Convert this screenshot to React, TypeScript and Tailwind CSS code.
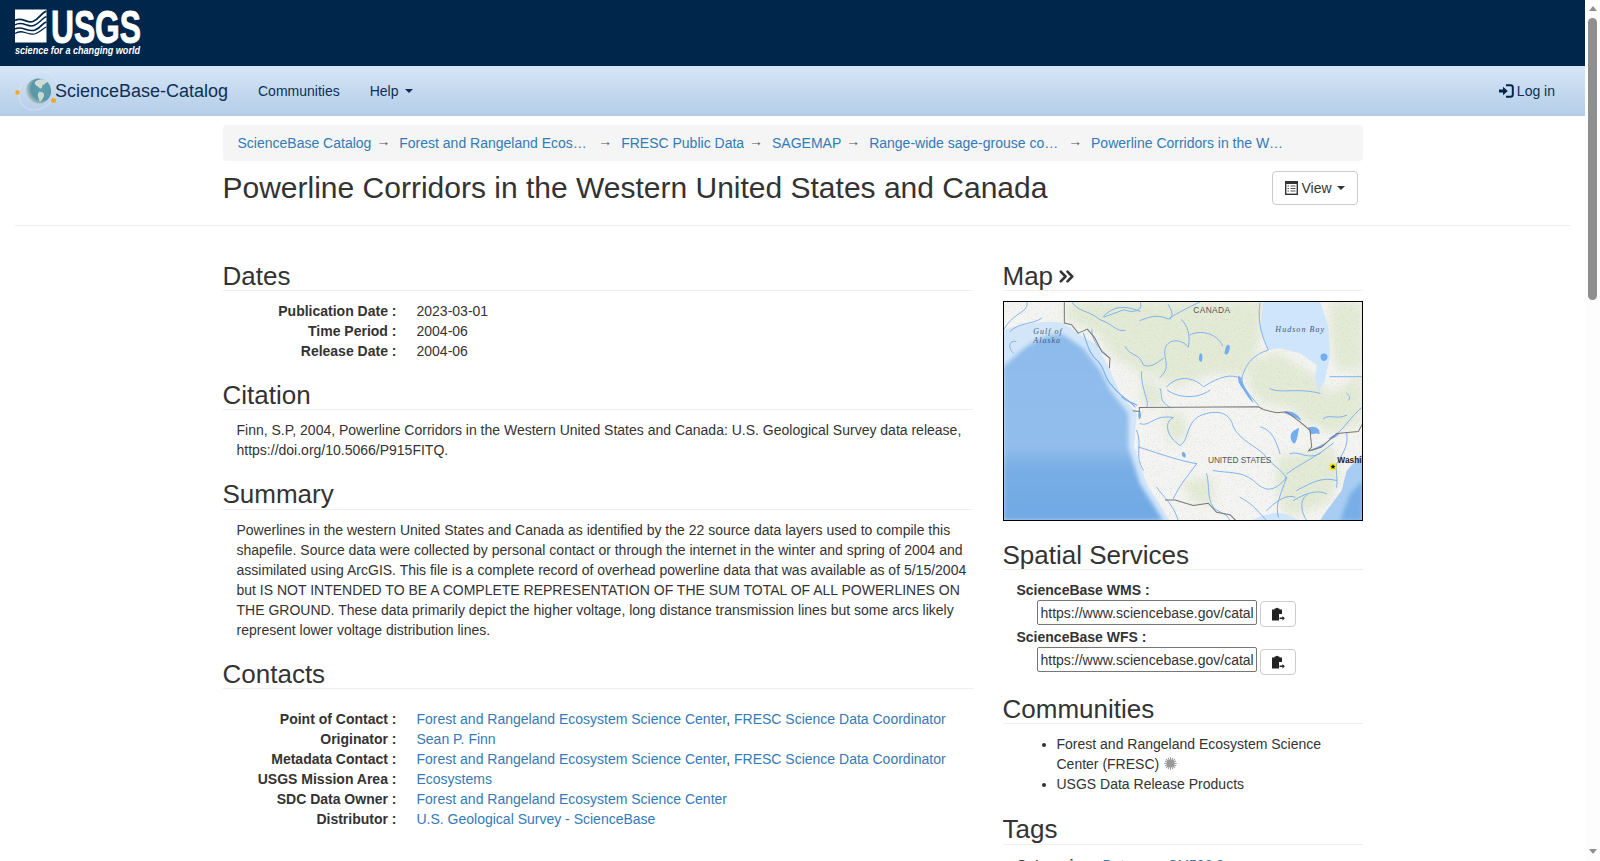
import React from 'react';
import { ChevronsRight } from 'lucide-react';

const UsgsLogo = () => (
  <svg width="150" height="66" viewBox="0 0 150 66" className="block">
    <rect x="15" y="9.5" width="31.5" height="33" fill="#fff" />
    <g fill="none" stroke="#00264c">
      <path d="M15 20.5C22 16 27 24 33 21.5S41 13 46.5 11" strokeWidth="1.8" />
      <path d="M15 25C22 20 28 28 34 25.5S42 18 46.5 16.5" strokeWidth="1.5" />
      <path d="M15 29C22 25 28 33 35 30S42 23 46.5 22" strokeWidth="1.6" />
      <path d="M15 33.5C23 28 29 37 36 33.5S43 28 46.5 27" strokeWidth="1.2" />
    </g>
    <text x="51" y="42.5" fontSize="46" fontWeight="700" fill="#fff" stroke="#fff" strokeWidth="1" textLength="90" lengthAdjust="spacingAndGlyphs" fontFamily="Liberation Sans">USGS</text>
    <text x="15" y="54" fontSize="10.5" fontWeight="700" fontStyle="italic" fill="#fff" textLength="125" lengthAdjust="spacingAndGlyphs" fontFamily="Liberation Sans">science for a changing world</text>
  </svg>
);

const GlobeLogo = () => (
  <svg width="42" height="50" viewBox="13 66 42 50" className="block shrink-0 overflow-visible">
    <defs>
      <radialGradient id="globe" cx="0.64" cy="0.42" r="0.72">
        <stop offset="0" stopColor="#5d9fb0" />
        <stop offset="0.6" stopColor="#5a97a6" />
        <stop offset="0.82" stopColor="#a7bcc0" />
        <stop offset="1" stopColor="#e8e8e6" />
      </radialGradient>
    </defs>
    <ellipse cx="38" cy="91" rx="21" ry="17" fill="none" stroke="#dbe8f4" strokeWidth="0.7" transform="rotate(-45 38 91)" />
    <circle cx="38.5" cy="91" r="12.6" fill="url(#globe)" />
    <path d="M36 81c3-2 7-2.500 10-1 2 1.500 1 3-1 3.500-1 1.500-3 1.500-3 3.500 0 1.500-2 2-3 .5-1.500-1.500-3-1.500-4-3.500-.5-1.500 0-2.500 1-3z" fill="#cfdcd6" />
    <path d="M39 92c2-.5 4 .5 5 2 .5 2-.5 3.500-1.500 5-1 1.500-2 3-3 2.500-.5-2-1-3.500-1.500-5-.5-1.500 0-3.500 1-4.500z" fill="#c9d9d2" />
    <circle cx="17.500" cy="92.500" r="2.200" fill="#f5a623" />
    <circle cx="53.500" cy="100.500" r="2.500" fill="#f5a623" />
  </svg>
);

const LogInIcon = () => (
  <svg width="15" height="14" viewBox="0 0 15 14" className="shrink-0">
    <path d="M0 5.500h4V2.800L8.800 7 4 11.200V8.500H0z" fill="#00264c" />
    <path d="M7 1.200h4.500a2.300 2.300 0 0 1 2.300 2.300v7a2.300 2.300 0 0 1-2.300 2.300H7" fill="none" stroke="#00264c" strokeWidth="2" />
  </svg>
);

const ListIcon = () => (
  <svg width="13" height="14" viewBox="0 0 13 14" className="shrink-0">
    <rect x="0.700" y="0.700" width="11.600" height="12.600" fill="#fff" stroke="#333" strokeWidth="1.400" />
    <path d="M1 1h11v2H1z" fill="#333" />
    <path d="M2.500 5h1.500M2.500 7.500h1.500M2.500 10h1.500M5.500 5h5M5.500 7.500h5M5.500 10h5" stroke="#555" strokeWidth="1.100" />
  </svg>
);

const PasteIcon = () => (
  <svg width="14" height="14" viewBox="0 0 14 14">
    <path d="M1 2.500h2.500V1.500h1.200a1.500 1.500 0 0 1 2.600 0h1.200v1H11V7H8v6.500H1z" fill="#222" />
    <path d="M8.500 10.500h3V9l2.300 2.200-2.300 2.200v-1.500h-3z" fill="#222" />
  </svg>
);

const AsteriskIcon = () => (
  <svg width="13" height="13" viewBox="0 0 12 12" className="inline-block align-[-1px] ml-[1px]">
    <circle cx="6" cy="6" r="3.500" fill="#999" />
    <path d="M6 .3v11.400M.3 6h11.400M2 2l8 8M10 2l-8 8M3.800 .8l4.400 10.400M8.200 .8 3.800 11.200M.8 3.800l10.400 4.400M11.200 3.800.8 8.200" stroke="#999" strokeWidth="1" />
  </svg>
);

// hand traced base map, coordinates are in the 3x crop of the reference
const MapPicture = () => (
  <svg viewBox="12 37 1074 651" preserveAspectRatio="none" className="block w-full h-full font-['Liberation_Sans',sans-serif]">
    <defs>
      <linearGradient id="deep" x1="0" y1="0" x2="0" y2="1">
        <stop offset="0" stopColor="#8dbbeb" />
        <stop offset="0.6" stopColor="#92bdec" />
        <stop offset="0.72" stopColor="#78aee5" />
        <stop offset="1" stopColor="#70a9e4" />
      </linearGradient>
      <filter id="soft"><feGaussianBlur stdDeviation="7" /></filter>
      <filter id="softer"><feGaussianBlur stdDeviation="14" /></filter>
      <filter id="grain">
        <feTurbulence type="fractalNoise" baseFrequency="0.45" numOctaves="2" seed="4" />
        <feColorMatrix values="0 0 0 0 0.55  0 0 0 0 0.58  0 0 0 0 0.48  0 0 0 5 -2.700" />
      </filter>
    </defs>
    <rect x="0" y="0" width="1100" height="700" fill="#f4f4f2" />
    <g fill="#e3ead6" filter="url(#softer)">
      <path d="M200 35H800L770 190 730 260 640 250 520 290 470 260 420 250 340 200 290 130 200 90z" />
      <path d="M750 220L830 185 950 260 990 310 1088 250V400L1000 430 930 400 860 350 790 340 745 280z" />
      <path d="M990 35H1088V240L1010 240 990 140z" />
      <path d="M420 260L480 290 490 350 430 345z" />
      <path d="M490 370H550L560 440 510 460z" />
      <path d="M830 500L1000 470 1020 560 980 640 860 680 830 600z" />
      <path d="M550 570L640 560 640 640 570 630z" />
    </g>
    <rect x="0" y="0" width="1100" height="700" filter="url(#grain)" opacity="0.25" />
    <path d="M10 120C60 108 120 88 190 100L240 135 290 165 330 240 360 310 410 370 402 470 440 580 510 690H10z" fill="#d3e6f9" />
    <path d="M10 230C60 185 120 125 190 135L250 175 300 240 330 300 385 370 385 470 420 580 490 690H10z" fill="url(#deep)" filter="url(#soft)" />
    <path d="M790 35H960L985 110 990 200 975 270 955 305 945 265 950 225 900 190 840 175 805 180 780 120z" fill="#cfe5fb" />
    <path d="M1088 490L1040 540 1025 600 980 660 960 690H1088z" fill="#a9cdf2" />
    <path d="M1088 570L1050 610 1020 690H1088z" fill="#78aee6" filter="url(#soft)" />
    <path d="M750 690C790 672 830 662 850 668L900 690z" fill="#cfe5fb" />
    <g fill="none" stroke="#74adf0" strokeWidth="2.700" strokeLinecap="round" strokeLinejoin="round">
      <path d="M80 35C90 70 45 62 12 118" />
      <path d="M30 125C60 95 100 105 125 85" />
      <path d="M40 190C20 170 30 150 48 155" />
      <path d="M215 35C235 70 262 58 300 90C335 100 350 128 375 122" />
      <path d="M310 80C340 50 370 45 420 65" />
      <path d="M420 35C432 62 402 72 372 60L312 82" />
      <path d="M420 92C445 85 465 70 505 88C525 72 590 42 602 35" />
      <path d="M505 45C518 68 520 75 510 88" />
      <path d="M545 90C562 108 572 132 565 172C540 142 500 150 495 178C490 210 515 232 480 262" />
      <path d="M570 135C600 120 650 128 668 168" />
      <path d="M780 40C770 100 790 150 805 180C760 195 740 220 730 250C715 280 745 310 775 345" />
      <path d="M375 170C390 200 420 190 430 225C450 235 470 220 490 205" />
      <path d="M425 245C420 290 452 340 440 350" />
      <path d="M480 295C490 325 475 330 510 352" />
      <path d="M500 290C540 248 590 268 610 290C660 260 690 250 725 265" />
      <path d="M502 300C530 322 590 330 630 300" />
      <path d="M810 295C830 312 900 292 960 310" />
      <path d="M990 260H1088" />
      <path d="M970 385C990 370 1010 390 1040 375" />
      <path d="M1040 310C1052 320 1050 325 1046 330" />
      <path d="M420 400C450 412 460 372 520 382C490 396 500 440 540 465C570 450 555 382 620 370C660 360 690 370 700 410C720 450 770 470 790 490C810 520 850 540 860 565" />
      <path d="M782 410C820 420 830 460 840 490" />
      <path d="M415 470C450 480 530 510 590 520" />
      <path d="M590 520C560 560 535 590 520 625" />
      <path d="M640 540C690 550 720 540 760 570C790 600 820 612 860 560" />
      <path d="M860 560C840 620 825 640 835 680" />
      <path d="M860 550C900 520 950 500 1000 458" />
      <path d="M870 490C900 480 920 510 960 490" />
      <path d="M890 600C945 570 970 560 1010 570" />
      <path d="M880 630C930 600 960 600 980 610" />
      <path d="M620 550C630 590 620 620 640 650C660 670 680 665 690 690" />
      <path d="M720 620C760 640 780 670 800 690" />
      <path d="M1010 430C1030 420 1050 380 1088 350" />
      <path d="M1040 430C1045 460 1035 480 1010 520C1005 540 1015 570 1010 590" />
      <path d="M410 420C430 470 400 490 430 540" />
      <path d="M470 590C490 620 520 640 535 690" />
      <path d="M920 690C895 650 905 620 925 610" />
      <path d="M800 660C830 630 860 610 885 620" />
      <path d="M250 130C262 160 265 190 295 215C315 235 315 270 335 285C350 310 380 325 405 350" strokeWidth="3.200" />
      <path d="M275 120C280 165 300 175 320 195" />
      <path d="M365 320C380 335 395 335 410 345" strokeWidth="3.200" />
    </g>
    <g fill="#74adf0">
      <path d="M678 170C688 158 692 170 688 182 684 198 672 196 674 186z" />
      <path d="M600 190C608 188 610 206 604 216 594 214 596 200 600 190z" />
      <path d="M962 195C975 185 985 195 982 205 975 218 960 215 962 195z" />
      <path d="M716 258C722 256 724 275 733 290 742 308 756 322 760 338 748 330 734 304 724 290 716 278 712 268 716 258z" />
      <path d="M850 368C870 358 892 368 905 392 885 380 868 376 850 368z" />
      <path d="M897 412C894 432 892 450 884 460 872 456 866 432 880 422z" />
      <path d="M925 412C950 404 962 420 958 432 948 426 935 436 930 430z" />
      <path d="M925 482C945 472 965 464 982 454 970 470 945 482 925 482z" />
      <path d="M985 445C998 436 1010 430 1020 428 1010 440 998 448 985 445z" />
      <path d="M548 485C556 484 560 496 555 502 546 500 542 490 548 485z" />
      <path d="M418 360C424 365 426 380 418 388 413 380 414 368 418 360z" />
    </g>
    <g fill="none" stroke="#777" strokeWidth="3" strokeLinejoin="round">
      <path d="M193 35V100L215 105 235 130 262 118 285 145 305 185 330 205 328 235" />
      <path d="M398 362L418 364V352L775 350 790 358 830 368 860 365 900 395 930 420 935 470 925 482 965 470 1010 430 1075 424 1088 400" />
      <path d="M495 628H525L580 645 625 638 650 665 690 672 708 690" />
    </g>
    <text x="580" y="71" fontSize="25" fill="#555" textLength="110">CANADA</text>
    <text x="826" y="128" fontSize="24" fontStyle="italic" fill="#46587a" fontFamily="Liberation Serif" textLength="146">Hudson Bay</text>
    <text x="100" y="134" fontSize="24" fontStyle="italic" fill="#46587a" fontFamily="Liberation Serif" textLength="85">Gulf of</text>
    <text x="100" y="160" fontSize="24" fontStyle="italic" fill="#46587a" fontFamily="Liberation Serif" textLength="80">Alaska</text>
    <text x="624" y="517" fontSize="25" fill="#555" textLength="190">UNITED STATES</text>
    <text x="1012" y="517" fontSize="25" fontWeight="700" fill="#222">Washi</text>
    <circle cx="999" cy="529" r="11" fill="#f7ee1a" />
    <path d="M999 521l2.300 5.200 5.600.5-4.300 3.600 1.300 5.500-4.900-2.900-4.900 2.900 1.300-5.500-4.300-3.600 5.600-.5z" fill="#111" />
  </svg>
);

const Heading = ({ children }: { children: React.ReactNode }) => (
  <h3 className="text-[26px] leading-[28.4px] font-normal text-[#333] border-b border-[#eee] mb-[10px]">{children}</h3>
);

const A = ({ children }: { children: React.ReactNode }) => (
  <a className="text-[#337ab7]">{children}</a>
);

const Row = ({ label, children }: { label: string; children: React.ReactNode }) => (
  <div className="grid grid-cols-[160px_1fr] gap-x-5">
    <div className="font-bold text-right whitespace-nowrap">{label} :</div>
    <div>{children}</div>
  </div>
);

const crumbs = [
  'ScienceBase Catalog',
  'Forest and Rangeland Ecosystem Science Center',
  'FRESC Public Data',
  'SAGEMAP',
  'Range-wide sage-grouse conservation assessment',
  'Powerline Corridors in the Western United States and Canada',
];

const Breadcrumb = () => (
  <div className="flex items-center h-9 px-[15px] bg-[#f5f5f5] rounded">
    {crumbs.map((c, i) => (
      <React.Fragment key={c}>
        {i > 0 && <span className="px-[5px] mb-[4px] text-[#555] whitespace-pre">{'\u2192\u00a0'}</span>}
        <a className="block max-w-[194px] truncate text-[#337ab7]">{c}</a>
      </React.Fragment>
    ))}
  </div>
);

const ServiceRow = ({ label, btn }: { label: string; btn: string }) => (
  <div>
    <div className="font-bold h-5 pl-[14px]">{label} :</div>
    <div className="flex items-start pl-[34px]">
      <input
        readOnly
        value="https://www.sciencebase.gov/catal"
        className="w-[220px] h-[25px] px-[3px] border border-[#767676] rounded-[2px] text-[#333] bg-white text-[14px] outline-none"
      />
      <button className={`ml-[3px] w-9 h-[26px] flex items-center justify-center bg-white border border-[#ccc] rounded ${btn}`}>
        <PasteIcon />
      </button>
    </div>
  </div>
);

export default function App() {
  return (
    <div className="flex h-[861px] overflow-hidden bg-white text-[14px] leading-5 text-[#333] font-['Liberation_Sans',Arial,sans-serif]">
      <div className="flex-1 min-w-0">
        <header className="h-[66px] bg-[#00264c]">
          <UsgsLogo />
        </header>

        <nav className="h-[50px] flex items-center bg-gradient-to-b from-[#d5e6f7] to-[#b4cde7] text-[#0d2f57]">
          <div className="flex items-center pl-[13px] w-[243px]">
            <GlobeLogo />
            <span className="text-[18px]">ScienceBase-Catalog</span>
          </div>
          <a className="px-[15px]">Communities</a>
          <a className="flex items-center px-[15px]">
            Help
            <span className="ml-[6px] border-x-4 border-x-transparent border-t-4 border-t-[#0d2f57]" />
          </a>
          <a className="ml-auto mr-[30px] flex items-center gap-[3px]">
            <LogInIcon />
            Log in
          </a>
        </nav>

        <div className="w-[1170px] mx-auto px-[15px] pt-[9px]">
          <Breadcrumb />
          <div className="flex items-center justify-between h-[34px] mt-[10px] pr-[5px]">
            <h1 className="text-[30px] leading-[33px] font-normal mb-[2px]">Powerline Corridors in the Western United States and Canada</h1>
            <button className="flex items-center h-[34px] w-[86px] pl-[12px] bg-white border border-[#ccc] rounded">
              <ListIcon />
              <span className="ml-[4px]">View</span>
              <span className="ml-[5px] border-x-4 border-x-transparent border-t-4 border-t-[#333]" />
            </button>
          </div>
        </div>

        <div className="mx-[15px] mt-5 h-px bg-[#eee]" />

        <div className="w-[1170px] mx-auto px-[15px] pt-[35.600px] grid grid-cols-[750px_360px] gap-x-[30px]">
          <main>
            <section className="mb-5">
              <Heading>Dates</Heading>
              <div className="pl-[14px]">
                <Row label="Publication Date">2023-03-01</Row>
                <Row label="Time Period">2004-06</Row>
                <Row label="Release Date">2004-06</Row>
              </div>
            </section>

            <section className="mb-5">
              <Heading>Citation</Heading>
              <p className="pl-[14px]">
                Finn, S.P, 2004, Powerline Corridors in the Western United States and Canada: U.S. Geological Survey data release, https://doi.org/10.5066/P915FITQ.
              </p>
            </section>

            <section className="mb-5">
              <Heading>Summary</Heading>
              <p className="pl-[14px]">
                Powerlines in the western United States and Canada as identified by the 22 source data layers used to compile this shapefile. Source data were collected by personal contact or through the internet in the winter and spring of 2004 and assimilated using ArcGIS. This file is a complete record of overhead powerline data that was available as of 5/15/2004 but IS NOT INTENDED TO BE A COMPLETE REPRESENTATION OF THE SUM TOTAL OF ALL POWERLINES ON THE GROUND. These data primarily depict the higher voltage, long distance transmission lines but some arcs likely represent lower voltage distribution lines.
              </p>
            </section>

            <section>
              <Heading>Contacts</Heading>
              <div className="pl-[14px] pt-[10px]">
                <Row label="Point of Contact"><A>Forest and Rangeland Ecosystem Science Center</A>, <A>FRESC Science Data Coordinator</A></Row>
                <Row label="Originator"><A>Sean P. Finn</A></Row>
                <Row label="Metadata Contact"><A>Forest and Rangeland Ecosystem Science Center</A>, <A>FRESC Science Data Coordinator</A></Row>
                <Row label="USGS Mission Area"><A>Ecosystems</A></Row>
                <Row label="SDC Data Owner"><A>Forest and Rangeland Ecosystem Science Center</A></Row>
                <Row label="Distributor"><A>U.S. Geological Survey - ScienceBase</A></Row>
              </div>
            </section>
          </main>

          <aside>
            <section>
              <Heading>
                <span className="flex items-center gap-[2px]">Map <ChevronsRight size={23} strokeWidth={2.7} className="text-[#333] mt-[2px]" /></span>
              </Heading>
              <div className="h-[220px] border border-black">
                <MapPicture />
              </div>
            </section>

            <section className="mt-5">
              <Heading>Spatial Services</Heading>
              <ServiceRow label="ScienceBase WMS" btn="mt-[1px]" />
              <ServiceRow label="ScienceBase WFS" btn="mt-[2px]" />
            </section>

            <section className="mt-[19.500px]">
              <Heading>Communities</Heading>
              <ul className="list-disc pl-[54px]">
                <li>Forest and Rangeland Ecosystem Science Center (FRESC) <AsteriskIcon /></li>
                <li>USGS Data Release Products</li>
              </ul>
            </section>

            <section className="mt-[21px]">
              <Heading>Tags</Heading>
              <div className="flex pl-[14px]">
                <span className="font-bold w-[86px] shrink-0">Categories :</span>
                <A>Data</A>
                <span className="ml-[36px]"><A>SM592.0</A></span>
              </div>
            </section>
          </aside>
        </div>
      </div>

      <div className="w-[15px] shrink-0 bg-[#fdfdfd] flex flex-col items-center">
        <span className="mt-[6px] border-x-[4px] border-x-transparent border-b-[5px] border-b-[#8f8f8f]" />
        <div className="mt-[7px] w-[9.500px] h-[282px] bg-[#8f8f8f] rounded-[5px]" />
        <span className="mt-auto mb-[7px] border-x-[4px] border-x-transparent border-t-[5px] border-t-[#8f8f8f]" />
      </div>
    </div>
  );
}
